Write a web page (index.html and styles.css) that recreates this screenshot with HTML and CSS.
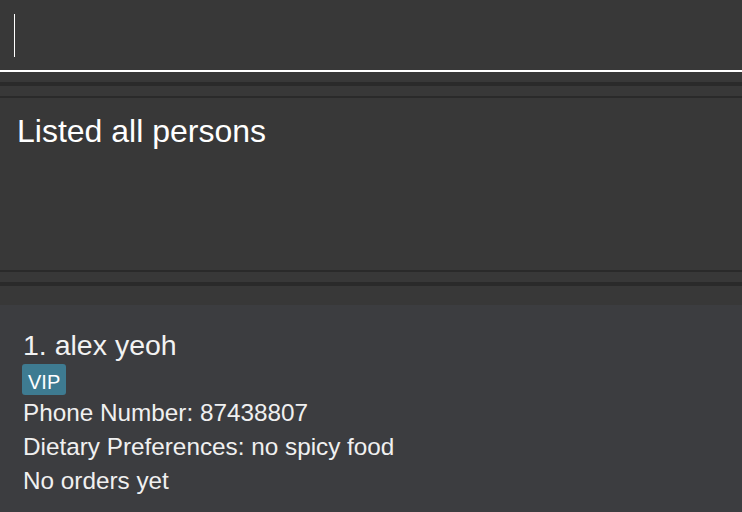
FILE: index.html
```html
<!DOCTYPE html>
<html>
<head>
<meta charset="utf-8">
<link rel="stylesheet" href="styles.css">
</head>
<body>
<div class="app">
  <div class="command-box">
    <div class="caret"></div>
  </div>
  <div class="gap"></div>
  <div class="divider thick"></div>
  <div class="gap"></div>
  <div class="divider thin"></div>
  <div class="result-display">Listed all persons</div>
  <div class="divider thin"></div>
  <div class="gap"></div>
  <div class="divider thick"></div>
  <div class="gap-lg"></div>
  <div class="person-list">
    <div class="person-card">
      <div class="name">1. alex yeoh</div>
      <div class="tags"><span class="tag">VIP</span></div>
      <div class="field">Phone Number: 87438807</div>
      <div class="field">Dietary Preferences: no spicy food</div>
      <div class="field">No orders yet</div>
    </div>
  </div>
</div>
</body>
</html>
```

FILE: styles.css
```css
html, body {
  margin: 0;
  padding: 0;
  width: 742px;
  height: 512px;
  overflow: hidden;
  background: #383838;
  font-family: "Liberation Sans", Arial, sans-serif;
}

.app {
  display: flex;
  flex-direction: column;
  height: 512px;
  background: #383838;
}

.command-box {
  border-bottom: 2px solid #ffffff;
  display: flex;
  align-items: flex-start;
  padding-left: 14px;
  padding-top: 14px;
  box-sizing: content-box;
  height: 56px;
}

.caret {
  width: 1px;
  height: 43px;
  background: #ffffff;
}

.gap {
  height: 10px;
}

.gap-lg {
  height: 19px;
}

.divider {
  background: #2a2a2a;
}

.divider.thick {
  height: 4px;
}

.divider.thin {
  height: 2px;
}

.result-display {
  height: 172px;
  box-sizing: border-box;
  padding: 13px 0 0 17px;
  font-size: 32px;
  line-height: 40px;
  color: #ffffff;
}

.person-list {
  flex: 1;
  background: #3c3d40;
}

.person-card {
  padding: 23px 0 0 23px;
  color: #f0f0f0;
}

.name {
  font-size: 28.5px;
  line-height: 34px;
  color: #f2f2f2;
}

.tags {
  display: flex;
  margin-top: 2px;
}

.tag {
  display: inline-block;
  height: 31px;
  box-sizing: border-box;
  padding: 5px 6px 0 6px;
  font-size: 20px;
  line-height: 26px;
  color: #ffffff;
  background: #3e7b91;
  border-radius: 3px;
  margin-left: -1px;
}

.field {
  font-size: 24.3px;
  line-height: 34px;
}

.tags + .field {
  margin-top: 1px;
}
```
